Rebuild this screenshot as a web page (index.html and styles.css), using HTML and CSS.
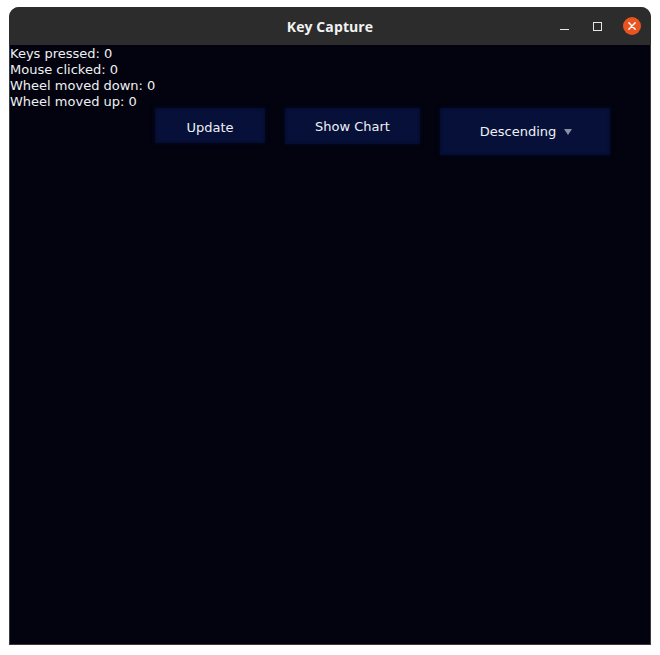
FILE: index.html
```html
<!DOCTYPE html>
<html>
<head>
<meta charset="utf-8">
<link rel="stylesheet" href="styles.css">
</head>
<body>
<div class="window">
  <div class="titlebar">
    <span class="title">Key Capture</span>
    <div class="controls">
      <span class="minimize"></span>
      <span class="maximize"></span>
      <span class="close">
        <svg width="18" height="18" viewBox="0 0 18 18"><circle cx="9" cy="9" r="9" fill="#e95420"/><path d="M5.8 5.8 L12.2 12.2 M12.2 5.8 L5.8 12.2" stroke="#ffffff" stroke-width="1.4" stroke-linecap="round"/></svg>
      </span>
    </div>
  </div>
  <div class="content">
    <div class="stats">
      <div>Keys pressed: 0</div>
      <div>Mouse clicked: 0</div>
      <div>Wheel moved down: 0</div>
      <div>Wheel moved up: 0</div>
    </div>
    <div class="actions">
      <button class="btn btn-update">Update</button>
      <button class="btn btn-chart">Show Chart</button>
      <button class="btn btn-sort">Descending <span class="arrow"></span></button>
    </div>
  </div>
</div>
</body>
</html>
```

FILE: styles.css
```css
html, body {
  margin: 0;
  padding: 0;
  background: #ffffff;
}
body {
  font-family: "DejaVu Sans", sans-serif;
}
.window {
  margin: 7px 0 0 9px;
  width: 642px;
  height: 638px;
  display: flex;
  flex-direction: column;
  border-radius: 10px 10px 0 0;
  overflow: hidden;
  background: #2c2c2c;
}
.titlebar {
  height: 38px;
  flex: none;
  background: #2c2c2c;
  display: flex;
  align-items: center;
  justify-content: center;
  position: relative;
}
.title {
  color: #f2f2f2;
  font-family: "Open Sans", "DejaVu Sans", sans-serif;
  font-weight: 700;
  font-size: 14px;
  letter-spacing: 0.1px;
}
.controls {
  position: absolute;
  right: 10px;
  top: 10px;
  display: flex;
  align-items: center;
  height: 18px;
}
.minimize {
  width: 9px;
  height: 1.5px;
  background: #e6e6e6;
  margin-top: 7px;
}
.maximize {
  width: 7px;
  height: 7px;
  border: 1.5px solid #e6e6e6;
  margin-left: 24px;
}
.close {
  display: flex;
  margin-left: 21px;
}
.content {
  flex: 1;
  background: #02030f;
  border: 1px solid #3a3a3a;
  border-top: none;
  color: #f0f0f0;
  font-size: 13px;
  line-height: 16px;
}
.stats {
  padding-top: 1px;
}
.actions {
  display: flex;
  align-items: flex-start;
  gap: 20px;
  margin-left: 145px;
  margin-top: -2px;
}
.btn {
  font-family: "DejaVu Sans", sans-serif;
  font-size: 13px;
  color: #eef0f6;
  background: #061038;
  border: none;
  padding: 0;
  box-shadow: 0 0 3px 1px rgba(4, 10, 40, 0.7), inset 0 0 3px rgba(2, 4, 20, 0.6);
  display: flex;
  align-items: center;
  justify-content: center;
}
.btn-update {
  width: 110px;
  height: 35px;
  padding-top: 3px;
}
.btn-chart {
  width: 135px;
  height: 36px;
}
.btn-sort {
  width: 170px;
  height: 47px;
  gap: 8px;
  padding-left: 2px;
}
.arrow {
  width: 0;
  height: 0;
  border-left: 4px solid transparent;
  border-right: 4px solid transparent;
  border-top: 6px solid #8a90a4;
  margin-top: 1px;
}
```
